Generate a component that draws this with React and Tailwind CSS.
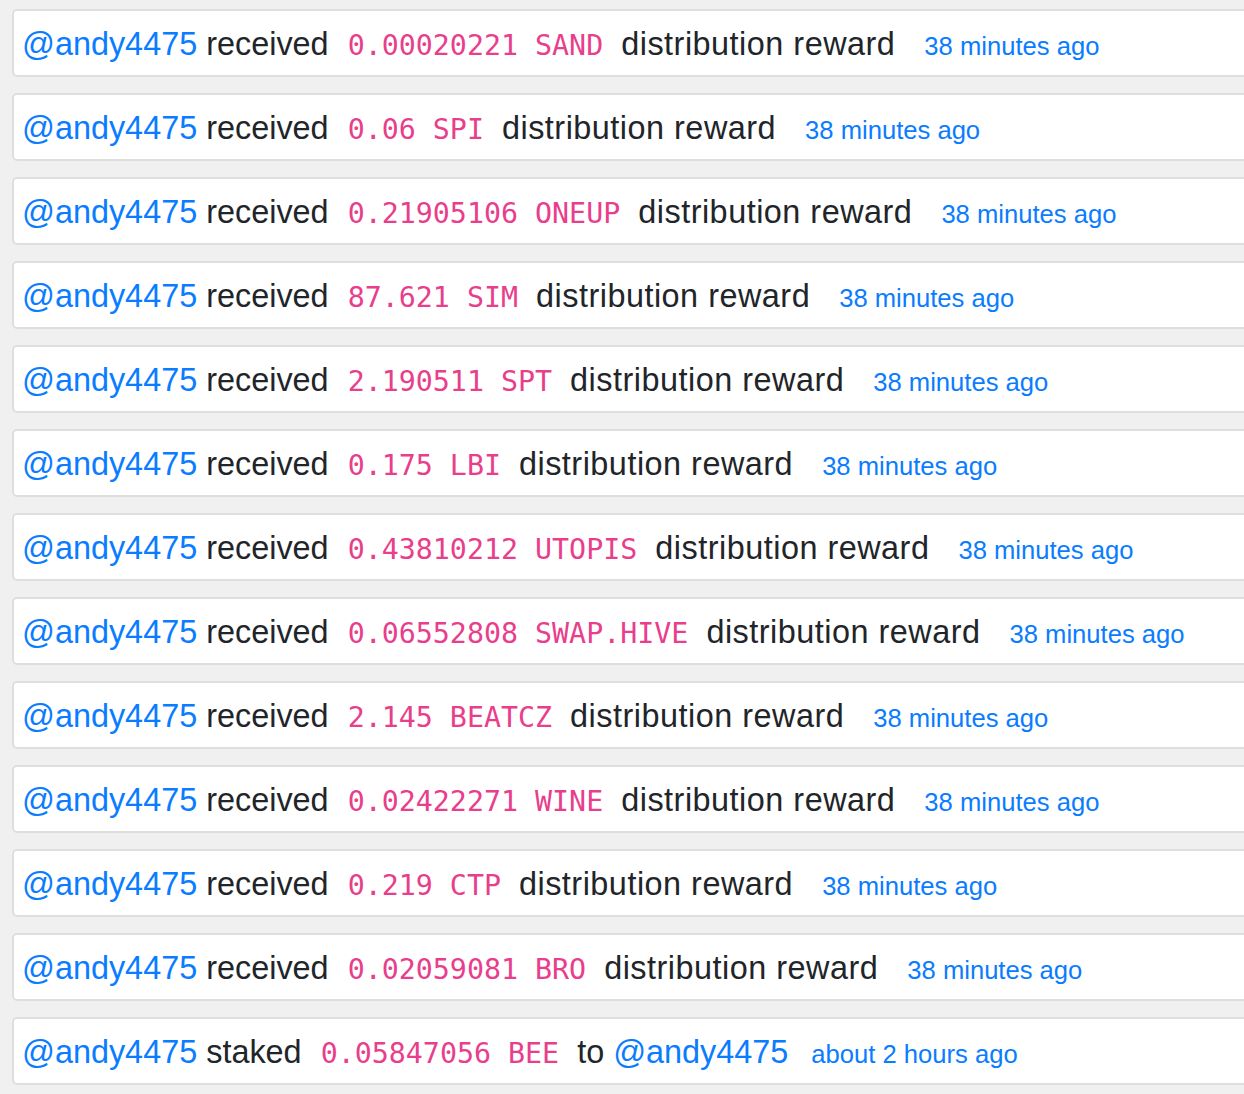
import React from "react";

const rows = [
  ["0.00020221", "SAND"],
  ["0.06", "SPI"],
  ["0.21905106", "ONEUP"],
  ["87.621", "SIM"],
  ["2.190511", "SPT"],
  ["0.175", "LBI"],
  ["0.43810212", "UTOPIS"],
  ["0.06552808", "SWAP.HIVE"],
  ["2.145", "BEATCZ"],
  ["0.02422271", "WINE"],
  ["0.219", "CTP"],
  ["0.02059081", "BRO"],
];

const sans = "font-['Liberation_Sans',Arial,sans-serif]";

function Card({ children }) {
  return (
    <div
      className={`box-border h-[68px] w-[1250px] shrink-0 overflow-hidden whitespace-nowrap rounded-[5px] border-2 border-[#dedede] bg-white pl-[8px] pt-[2px] text-[32.4px] leading-[62px] text-[#212529] ${sans}`}
    >
      {children}
    </div>
  );
}

function Code({ children }) {
  return (
    <code className="pl-[10px] pr-[9px] font-['DejaVu_Sans_Mono','Liberation_Mono',monospace] text-[28.3px] leading-none text-[#e83e8c]">
      {children}
    </code>
  );
}

function User() {
  return <a className="text-[#0a7cff]">@andy4475</a>;
}

export default function App() {
  return (
    <div className="min-h-[1094px] w-[1244px] overflow-hidden bg-[#f0f0f0]">
      <div className="flex flex-col gap-[16px] pl-[12px] pt-[9px]">
        {rows.map(([amt, sym], i) => (
          <Card key={i}>
            <User /> received <Code>{amt} {sym}</Code>{" "}
            <span className="tracking-[0.5px]">distribution reward</span>{" "}
            <small className="ml-[20px] text-[25.6px] leading-none text-[#0a7cff]">
              38 minutes ago
            </small>
          </Card>
        ))}
        <Card>
          <User /> staked <Code>0.05847056 BEE</Code> to <User />{" "}
          <small className="ml-[14px] text-[25.6px] leading-none text-[#0a7cff]">
            about 2 hours ago
          </small>
        </Card>
      </div>
    </div>
  );
}
